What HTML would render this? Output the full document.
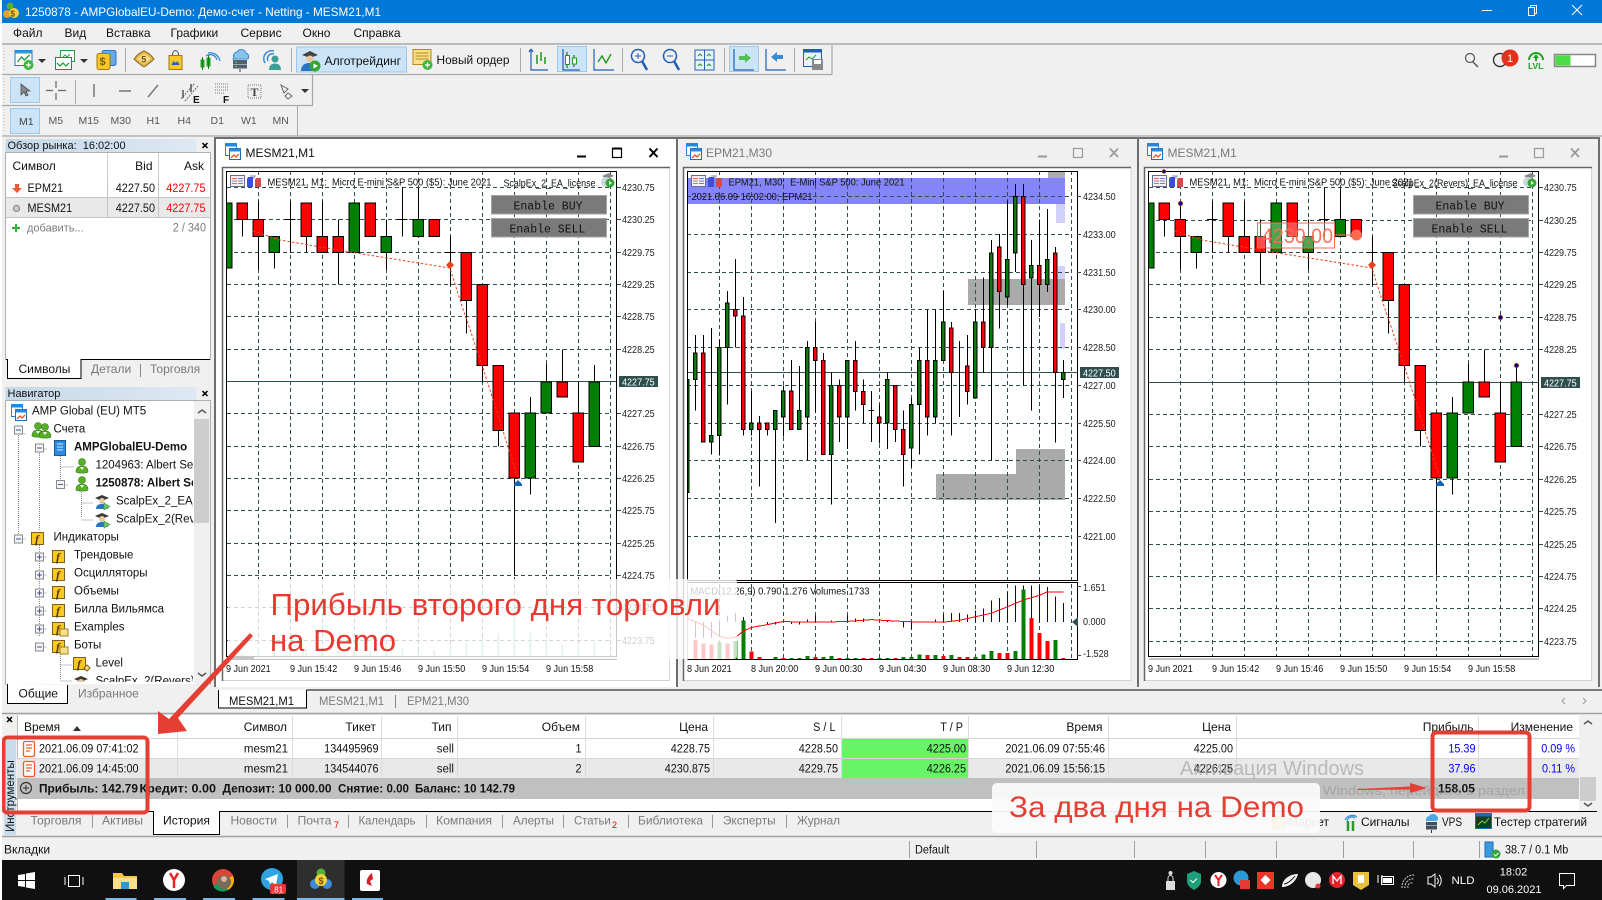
<!DOCTYPE html>
<html><head><meta charset="utf-8"><title>MT5</title>
<style>
html,body{margin:0;padding:0;background:#f0f0f0;overflow:hidden}
svg{display:block}
text{font-family:"Liberation Sans","Noto Sans CJK SC",sans-serif;font-size:11.5px;fill:#111;white-space:pre}
.m{font-size:12px}
.t{font-size:12px;transform-box:fill-box;transform-origin:0 50%;transform:scaleX(.905)}
.t.e{transform-origin:100% 50%}
.a{font-size:10.4px;fill:#222;transform-box:fill-box;transform-origin:0 50%;transform:scaleX(.87)}
.s{font-size:10.4px;fill:#111;transform-box:fill-box;transform-origin:0 50%;transform:scaleX(.87)}
.sl{font-size:10.4px;fill:#111}
.g{fill:#7a7a7a}
.b{font-weight:bold}
.e{text-anchor:end}
.w{fill:#fff}
.mo{font-family:"Liberation Mono",monospace;font-size:11.5px;fill:#111}
.f{font-family:"Liberation Serif",serif;font-style:italic;font-weight:bold;font-size:12px;fill:#5a3a00}
.c *{vector-effect:non-scaling-stroke}
.c{shape-rendering:crispEdges}
</style></head><body>
<svg width="1602" height="900" viewBox="0 0 1602 900" xmlns="http://www.w3.org/2000/svg">
<defs>
<clipPath id="tc"><rect x="6" y="401" width="187" height="281"/></clipPath>
<linearGradient id="hd" x1="0" x2="1" y1="0" y2="0"><stop offset="0" stop-color="#c6d9ea"/><stop offset="1" stop-color="#dde8f2"/></linearGradient>
<g id="wi"><rect x=".5" y=".5" width="11" height="12" fill="#fff" stroke="#1e88e5"/><rect x=".5" y=".5" width="11" height="3" fill="#1e88e5"/><rect x="4.5" y="5.5" width="11" height="11" fill="#fff" stroke="#1c6cb8"/><rect x="4.5" y="5.5" width="11" height="3" fill="#2a8ae0"/><path d="M6 15l3-3 2 2 3-3" fill="none" stroke="#e8542a" stroke-width="1.3"/></g>
<g id="hi"><rect x=".5" y=".5" width="14" height="11" fill="#f2f2f6" stroke="#6a6a96"/><path d="M2 3.500h5M2 6h5M2 8.500h5" stroke="#e46a6a"/><path d="M8 3.500h5M8 6h5M8 8.500h5" stroke="#7a7ad0"/><path d="M18 2h5v10h-6V4z" fill="#3c4fd8"/><path d="M26 3h5v9h-6V5z" fill="#d84a4a"/><path d="M20 1h6M24 1v3" stroke="#888" fill="none"/></g>
<g id="ro"><path d="M3 3l7-3 5 3-7 3z" fill="#888"/><circle cx="7" cy="9" r="5" fill="#c9d6e0"/><circle cx="11" cy="10" r="4.500" fill="#35a535"/><path d="M10 8l3 2-3 2z" fill="#fff"/></g>
<g id="us"><circle cx="7" cy="4" r="3.500" fill="#58b02a" stroke="#2d7a10" stroke-width=".6"/><path d="M1 14c0-5 3-6 6-6s6 1 6 6c-2 1.500-10 1.500-12 0z" fill="#58b02a" stroke="#2d7a10" stroke-width=".6"/><path d="M5 9l2 3 2-3" fill="#fff"/></g>
<g id="bot"><path d="M1 4l7-3 7 3-7 3z" fill="#3a3a3a"/><circle cx="8" cy="7" r="3" fill="#e9c7a0"/><path d="M2 15c0-4 3-5 6-5s6 1 6 5z" fill="#2b73c8"/><path d="M10 9l6 3.500-6 3.500z" fill="#6fc36f" stroke="#3c9a3c" stroke-width=".6"/></g>
<g id="fb"><rect x=".5" y=".5" width="12" height="12" fill="#f9c922" stroke="#7b6218"/></g>
<g id="pb"><rect x=".5" y=".5" width="8" height="8" fill="#f4f4f4" stroke="#8a8a8a"/><path d="M2 4.500h5M4.500 2v5" stroke="#3a5a9a"/></g>
<g id="mb"><rect x=".5" y=".5" width="8" height="8" fill="#f4f4f4" stroke="#8a8a8a"/><path d="M2 4.500h5" stroke="#3a5a9a"/></g>
<g id="dl"><rect x="3.500" y=".5" width="11" height="15" rx="1.500" fill="#fff" stroke="#e8602a" stroke-width="1.300"/><path d="M6 4h6M6 7h6M6 10h4" stroke="#e8602a" stroke-width="1.200"/></g>
<g id="c1" class="c">
<path fill="none" stroke="#000" d="M67 222V270M115 172V362M163 315V360M211 172V315M195 222H227M259 270V315M307 172V315M355 222V404M499 222V362M547 133V270M531 222H563M595 133V222M691 270V408M675 315H707M739 449V542M787 631V677M835 813V858M883 947V1219M931 720V993M979 626V677M1027 586V677M1075 677V765M1123 630V677"/>
<path fill="#008000" stroke="#000" d="M20 177H36V359H20ZM147 270h32v45h-32zM387 177h32v138h-32zM483 270h32v45h-32zM579 222h32v48h-32zM915 765h32v182h-32zM963 677h32v88h-32zM1107 677h32v181h-32z"/>
<path fill="#f00" stroke="#000" d="M51 177h32v45h-32zM99 222h32v48h-32zM243 177h32v93h-32zM291 270h32v45h-32zM339 270h32v45h-32zM435 177h32v93h-32zM627 222h32v48h-32zM723 315h32v134h-32zM771 404h32v227h-32zM819 631h32v182h-32zM867 765h32v182h-32zM1059 765h32v137h-32zM1011 677h32v43h-32z"/>
</g>
<g id="c1m">
<path fill="none" stroke="#f0401a" stroke-dasharray="2.500 2" d="M253 231L280 240 353 252.500 450 268 460 300 482 365 503 431 518 478"/>
<path d="M450 261l4 4-4 4-4-4z" fill="#e8401a"/>
<path d="M518 480l4 4v2h-8v-2z" fill="#1464b4"/>
</g>
</defs>

<rect width="1602" height="900" fill="#f0f0f0"/>
<!-- title bar -->
<rect x="2" y="0" width="1600" height="23" fill="#0078d7"/>
<circle cx="10" cy="6" r="3.500" fill="#5cb030"/><circle cx="7" cy="14" r="4" fill="#e8a020"/><circle cx="14" cy="13" r="5" fill="#f3d040"/><text x="10.500" y="16.500" style="font-size:8px;font-weight:bold;fill:#7a4a00">$</text>
<text x="25" y="16" class="m w" textLength="356" lengthAdjust="spacingAndGlyphs">1250878 - AMPGlobalEU-Demo: Демо-счет - Netting - MESM21,M1</text>
<path d="M1482 10.500h10" stroke="#fff"/><path d="M1528.500 7.500h6v8h-6zM1530.500 7.500v-2h6v8h-2" fill="none" stroke="#fff"/><path d="M1572 5l10 10M1582 5l-10 10" stroke="#fff"/>
<!-- menu -->
<rect y="23" width="1602" height="21" fill="#f0f0f0"/>
<text x="13" y="37" class="m">Файл</text><text x="64.500" y="37" class="m">Вид</text><text x="106" y="37" class="m">Вставка</text><text x="170.500" y="37" class="m">Графики</text><text x="240.500" y="37" class="m">Сервис</text><text x="302.500" y="37" class="m">Окно</text><text x="353.500" y="37" class="m">Справка</text>
<path d="M0 44h1602" stroke="#a8a8a8" stroke-width="1.500"/>
<!-- toolbars frames -->
<path d="M2 74.500H832V45M2 105.500H312.500V75M2 136H1602" fill="none" stroke="#a8a8a8" stroke-width="1.200"/>
<path d="M4 48v24M4 78v25M4 109v24" stroke="#bbb" stroke-dasharray="1 2" fill="none"/>
<!-- toolbar 1 icons -->
<g transform="translate(14.500,50)"><rect x=".5" y=".5" width="17" height="15" fill="#fff" stroke="#2373c8"/><rect x=".5" y=".5" width="17" height="3" fill="#2a9ad8"/><path d="M3 12l4-5 3 3 5-5" fill="none" stroke="#1f9a3a" stroke-width="1.300"/><circle cx="14" cy="15" r="5" fill="#3fb53f"/><path d="M11.500 15h5M14 12.500v5" stroke="#fff" stroke-width="1.300"/></g>
<path d="M38 59h8l-4 4zM80 59h8l-4 4z" fill="#333"/>
<g transform="translate(55,50)"><rect x="5.500" y=".5" width="14" height="11" fill="#fff" stroke="#2a9a40"/><path d="M8 7l2-2 2 2 3-3" fill="none" stroke="#2a9a40"/><rect x=".5" y="7.500" width="16" height="12" fill="#fff" stroke="#2373c8"/><path d="M2 13l3 3 3-3 3 3 3-3" stroke="#2a9a40" fill="none" stroke-width="1.300"/></g>
<g transform="translate(96.500,49)"><rect x="5.500" y="1.500" width="14" height="15" rx="2" fill="#6aa8e8" stroke="#2373c8"/><rect x=".5" y="4.500" width="13" height="16" rx="2" fill="#f6c92a" stroke="#a07810"/><text x="3" y="16" style="font-size:11px;font-weight:bold;fill:#7a5a00">$</text></g>
<path d="M125.500 48v24M291.500 48v24M520.500 48v24M622.500 48v24M724.500 48v24M794.500 48v24" stroke="#a8a8a8"/>
<g transform="translate(134,50)"><path d="M0 9C3 5 7 2 10 1c3 1 7 4 10 8-3 3-7 6-10 8C7 15 3 12 0 9z" fill="#e0b84a" stroke="#8a6a20"/><path d="M3 9c3-3 5-4 7-5 2 1 4 2 7 5-3 2-5 4-7 5-2-1-4-3-7-5z" fill="#f4dc8e"/><text x="7.300" y="12.500" style="font-size:9px;font-weight:bold;fill:#7a5200">5</text></g>
<g transform="translate(168.500,50)"><rect x=".5" y="5.500" width="13" height="14" fill="#f6c92a" stroke="#a07810"/><path d="M4 5c0-6 6-6 6 0" fill="none" stroke="#555"/><path d="M3 15l2-4 2 2 2-2 2 4z" fill="#2a5ac8"/></g>
<g transform="translate(199,49)"><path d="M7 7a7 7 0 0 1 11 4M9 4a10 10 0 0 1 12 8" fill="none" stroke="#3a8ad8" stroke-width="1.300"/><rect x="1.500" y="10.500" width="4" height="8" fill="#22a022"/><rect x="7.500" y="8.500" width="4" height="9" fill="#22a022"/><path d="M3.500 8v13M9.500 6v14" stroke="#138013"/></g>
<g transform="translate(230,49)"><path d="M4 9a4 4 0 0 1 3-6 5 5 0 0 1 9 1 4 4 0 0 1 2 6H3z" fill="#8ac4ea" stroke="#3a8ad8"/><rect x="3" y="11" width="14" height="4" fill="#506070"/><rect x="3" y="15.500" width="14" height="4" fill="#506070"/><path d="M5 13h2M5 17.500h2" stroke="#5fd65f"/><path d="M10 20v3" stroke="#333"/></g>
<g transform="translate(262,49)"><path d="M3 14a8 8 0 0 1 9-12M6 12a5 5 0 0 1 6-7" fill="none" stroke="#3a8ad8" stroke-width="1.500"/><circle cx="13" cy="10" r="3.500" fill="#3aa098"/><path d="M7 21c0-5 3-6.500 6-6.500s6 1.500 6 6.500z" fill="#3aa098"/></g>
<rect x="296.500" y="47" width="110" height="25" fill="#cce4f7" stroke="#99c9ef"/>
<g transform="translate(300,50)"><path d="M2 5l8-4 8 4-8 3z" fill="#444"/><circle cx="10" cy="9" r="3.500" fill="#e9c7a0"/><path d="M1 21c0-6 4-8 8-8s7 2 7 8z" fill="#2b73c8"/><circle cx="15" cy="16" r="5.500" fill="#35a535"/><path d="M13.500 13.500l4.500 2.500-4.500 2.500z" fill="#fff"/></g>
<text x="324.500" y="65" class="m" textLength="76.500" lengthAdjust="spacingAndGlyphs">Алготрейдинг</text>
<g transform="translate(412.500,49)"><rect x=".5" y=".5" width="18" height="15" fill="#f9e08a" stroke="#b48a18"/><path d="M3 4h13M3 7h13M3 10h13" stroke="#b48a18"/><circle cx="15" cy="16" r="5" fill="#3fb53f"/><path d="M12.500 16h5M15 13.500v5" stroke="#fff" stroke-width="1.300"/></g>
<text x="436.500" y="64" class="m" textLength="73" lengthAdjust="spacingAndGlyphs">Новый ордер</text>
<g fill="none" stroke="#1f5fb4" stroke-width="1.200"><path d="M531 49v21h17M531 49l-2 3M531 49l2 3"/></g><path d="M537 55v9M541 52v9M545 57v7" stroke="#1e9a1e" stroke-width="1.500"/>
<rect x="557.500" y="46.500" width="29" height="25" fill="#cce4f7" stroke="#99c9ef"/>
<g fill="none" stroke="#1f5fb4" stroke-width="1.200"><path d="M563 49v21h17"/><path d="M594 49v21h20"/><path d="M766 49v21h20"/></g>
<path d="M567 52v16M574 55v12" stroke="#333"/><rect x="565.500" y="55.500" width="4" height="9" fill="#fff" stroke="#1e9a1e"/><rect x="572.500" y="58" width="4" height="6" fill="#fff" stroke="#1e9a1e"/>
<path d="M598 62l4-6 4 7 5-9" fill="none" stroke="#1e9a1e" stroke-width="1.400"/>
<g fill="none" stroke="#1f5fb4"><circle cx="638" cy="56" r="6.500" stroke-width="1.500"/><path d="M642 61l5 9" stroke-width="2.500"/><path d="M635 56h6M638 53v6"/><circle cx="670" cy="56" r="6.500" stroke-width="1.500"/><path d="M674 61l5 9" stroke-width="2.500"/><path d="M667 56h6"/></g>
<rect x="695" y="50" width="19" height="20" fill="#e8f2fb" stroke="#1f5fb4"/><path d="M695 60h19M704.500 50v20" stroke="#1f5fb4"/><path d="M698 56l2-2 2 2M707 56l2-2 2 2M698 66l2-2 2 2M707 66l2-2 2 2" stroke="#1e9a1e" fill="none"/>
<rect x="729.500" y="46.500" width="29" height="25" fill="#cce4f7" stroke="#99c9ef"/>
<path d="M734 49v21h20" fill="none" stroke="#1f5fb4" stroke-width="1.200"/><path d="M739 56h6v-3l6 5-6 5v-3h-6z" fill="#52c052"/>
<path d="M783 55h-6v-3l-6 5 6 5v-3h6z" fill="#3a8ad8"/>
<rect x="803.500" y="49.500" width="18" height="17" fill="#e8f2fb" stroke="#1f5fb4"/><rect x="803.500" y="49.500" width="18" height="3" fill="#1f5fb4"/><path d="M806 60l3-3 3 2 4-4" stroke="#1e9a1e" fill="none"/><rect x="812" y="59" width="11" height="11" fill="#888"/><rect x="814" y="60" width="7" height="4" fill="#fff"/>
<!-- right status icons -->
<circle cx="1470" cy="58" r="4.500" fill="none" stroke="#555" stroke-width="1.200"/><path d="M1473 62l5 5" stroke="#555" stroke-width="1.500"/>
<circle cx="1500" cy="60" r="6.500" fill="none" stroke="#333" stroke-width="1.400"/><circle cx="1510" cy="58" r="8.500" fill="#e5301c"/><text x="1507" y="62" style="font-size:11px;fill:#fff">1</text>
<path d="M1529 60a7 7 0 0 1 14 0" fill="none" stroke="#22a022" stroke-width="2"/><path d="M1536 54l3 4h-2v3h-2v-3h-2z" fill="#22a022"/><text x="1528" y="69" style="font-size:8.500px;fill:#22a022;font-weight:bold">LVL</text>
<rect x="1554.500" y="54.500" width="41" height="12" fill="#fff" stroke="#888" stroke-width="1.500"/><rect x="1555.500" y="55.500" width="15" height="10" fill="#4cdc48"/>
<!-- toolbar 2 -->
<rect x="10.500" y="77.500" width="29" height="25" fill="#cce4f7" stroke="#99c9ef"/>
<path d="M21 84l0 11 3-3 2 4 2-1-2-4h4z" fill="#888" stroke="#444" stroke-width=".7"/>
<path d="M46 90.500h7M58 90.500h8M56 81v7M56 93v7" stroke="#666" stroke-width="1.200"/>
<path d="M75.500 80v24" stroke="#a8a8a8"/>
<path d="M94 84v13M119 91h12M158 85l-10 12" stroke="#777" stroke-width="1.500"/>
<g stroke="#777" fill="none" stroke-width="1.100" stroke-dasharray="2 1"><path d="M181 99l14-16M185 101l13-15"/></g><path d="M183 90v8M191 84v8" stroke="#555" stroke-width="1.500"/><text x="193" y="103" style="font-size:10px;font-weight:bold">E</text>
<path d="M215 84h13M215 87h13M215 90h13M215 93h10" stroke="#777" stroke-dasharray="1 1"/><text x="223" y="103" style="font-size:10px;font-weight:bold">F</text>
<rect x="248" y="85" width="13" height="13" fill="none" stroke="#777" stroke-dasharray="1 1"/><text x="250.500" y="96" style="font-family:'Liberation Serif',serif;font-size:12px;font-weight:bold;fill:#444">T</text>
<path d="M281 85l7 4-4 4zM288 93l4 3-4 3-3-3z" fill="none" stroke="#666"/>
<path d="M301 89h8l-4 4z" fill="#333"/>
<!-- toolbar 3 -->
<rect x="10.500" y="108.500" width="29" height="25" fill="#cce4f7" stroke="#99c9ef"/>
<text x="19" y="125" style="font-size:10.500px;fill:#444">M1</text><text x="48.500" y="124" style="font-size:10.500px;fill:#555">M5</text><text x="78.500" y="124" style="font-size:10.500px;fill:#555">M15</text><text x="110.500" y="124" style="font-size:10.500px;fill:#555">M30</text><text x="146.500" y="124" style="font-size:10.500px;fill:#555">H1</text><text x="177.500" y="124" style="font-size:10.500px;fill:#555">H4</text><text x="210.500" y="124" style="font-size:10.500px;fill:#555">D1</text><text x="241" y="124" style="font-size:10.500px;fill:#555">W1</text><text x="272.500" y="124" style="font-size:10.500px;fill:#555">MN</text>
<path d="M297.500 106v30" stroke="#a8a8a8"/>

<!-- market watch -->
<rect x="5.500" y="139" width="191" height="13" fill="url(#hd)"/>
<text x="7.500" y="149" style="font-size:11px">Обзор рынка:  16:02:00</text>
<path d="M202.500 143l5 5M207.500 143l-5 5" stroke="#000" stroke-width="1.500"/>
<rect x="5.500" y="152.500" width="205" height="207" fill="#fff" stroke="#b0b0b0"/>
<path d="M107.500 153v64M158.500 153v64" stroke="#d0d0d0"/>
<rect x="6" y="197.500" width="204" height="20" fill="#e9e9e9"/>
<path d="M6 197.500h204M6 217.500h204M107.500 178v40M158.500 178v40" stroke="#c4c4c4"/>
<text x="12.500" y="170" class="m">Символ</text><text x="152.500" y="170" class="m e">Bid</text><text x="204" y="170" class="m e">Ask</text>
<path d="M15 184h4v4h3l-5 5-5-5h3z" fill="#ec5a3a"/>
<text x="27.500" y="192" class="t">EPM21</text><text x="155" y="192" class="t e">4227.50</text><text x="205.500" y="192" class="t e" style="fill:#f00">4227.75</text>
<circle cx="16.500" cy="208.500" r="3" fill="#ccc" stroke="#888" stroke-width="1.200"/>
<text x="27.500" y="212" class="t">MESM21</text><text x="155" y="212" class="t e">4227.50</text><text x="205.500" y="212" class="t e" style="fill:#f00">4227.75</text>
<path d="M12 228h8M16 224v8" stroke="#2fb52f" stroke-width="2"/>
<text x="27" y="231.500" class="m g" style="font-size:11px">добавить...</text><text x="206" y="231.500" class="t g e">2 / 340</text>
<rect x="6" y="360" width="204" height="19" fill="#f0f0f0"/>
<path d="M6 359.500h204" stroke="#000"/>
<path d="M7.500 360v18.500H81V359.500" fill="#fff" stroke="#000"/><rect x="8" y="359" width="72.500" height="2" fill="#fff"/>
<text x="18.500" y="373" class="m">Символы</text><text x="91" y="373" class="m g">Детали</text><path d="M140.500 364v13" stroke="#888"/><text x="150" y="373" class="m g">Торговля</text>

<!-- navigator -->
<rect x="5.500" y="387" width="191" height="13.500" fill="url(#hd)"/>
<text x="7.500" y="397" style="font-size:11px">Навигатор</text>
<path d="M202.500 391l5 5M207.500 391l-5 5" stroke="#000" stroke-width="1.500"/>
<rect x="5.500" y="400.500" width="205" height="284" fill="#fff" stroke="#b0b0b0"/>
<rect x="194" y="401" width="16" height="283" fill="#f0f0f0"/><rect x="194" y="419" width="15" height="104" fill="#cdcdcd"/>
<path d="M198 413l4-3 4 3M198 673l4 3 4-3" fill="none" stroke="#555" stroke-width="1.500"/>
<g fill="none" stroke="#888" stroke-dasharray="1 1"><path d="M18.500 435v108M18.500 434h8M18.500 539h8M39.500 453v78M39.500 449h8M60.500 454v28M60.500 467h14M60.500 485h8M81.500 490v28M81.500 503h12M81.500 520h12M39.500 543v93M39.500 557h8M39.500 575h8M39.500 593h8M39.500 611h8M39.500 629h8M39.500 647h8M60.500 652v28M60.500 665h12M60.500 681h12"/></g>
<use href="#wi" x="11" y="404"/>
<g clip-path="url(#tc)">
<text x="32" y="414.500">AMP Global (EU) MT5</text>
<use href="#mb" x="14" y="425.500"/><use href="#us" x="31" y="422"/><use href="#us" x="38" y="423"/><text x="53.500" y="432.500">Счета</text>
<use href="#mb" x="35" y="443.500"/><rect x="54.500" y="440.500" width="11" height="15" fill="#2a8ae0" stroke="#1a5a98"/><path d="M57 444h6M57 447h6M57 450h6" stroke="#cfe8ff"/>
<text x="74" y="450.500" class="b">AMPGlobalEU-Demo</text>
<use href="#us" x="75" y="458"/><text x="95.500" y="468.500">1204963: Albert Sergeev</text>
<use href="#mb" x="56" y="480"/><use href="#us" x="75" y="476"/><text x="95.500" y="486.500" class="b">1250878: Albert Sergeev</text>
<use href="#bot" x="94" y="494"/><text x="116" y="504.500">ScalpEx_2_EA_license</text>
<use href="#bot" x="94" y="512"/><text x="116" y="522.500">ScalpEx_2(Revers)_EA</text>
<use href="#mb" x="14" y="534.500"/><use href="#fb" x="31" y="532"/><text x="35" y="543" class="f">f</text><text x="53.500" y="540.500">Индикаторы</text>
<use href="#pb" x="35" y="552.500"/><use href="#fb" x="52" y="550"/><text x="56" y="561" class="f">f</text><text x="74" y="558.500">Трендовые</text>
<use href="#pb" x="35" y="570.500"/><use href="#fb" x="52" y="568"/><text x="56" y="579" class="f">f</text><text x="74" y="576.500">Осцилляторы</text>
<use href="#pb" x="35" y="588.500"/><use href="#fb" x="52" y="586"/><text x="56" y="597" class="f">f</text><text x="74" y="594.500">Объемы</text>
<use href="#pb" x="35" y="606.500"/><use href="#fb" x="52" y="604"/><text x="56" y="615" class="f">f</text><text x="74" y="612.500">Билла Вильямса</text>
<use href="#pb" x="35" y="624.500"/><use href="#fb" x="52" y="622"/><text x="56" y="633" class="f">f</text><rect x="60" y="629" width="8" height="7" fill="#f9e08a" stroke="#a08020"/><text x="74" y="630.500">Examples</text>
<use href="#mb" x="35" y="642.500"/><use href="#fb" x="52" y="640"/><text x="56" y="651" class="f">f</text><rect x="60" y="647" width="8" height="7" fill="#f9e08a" stroke="#a08020"/><text x="74" y="648.500">Боты</text>
<use href="#fb" x="73" y="657"/><text x="77" y="668" class="f">f</text><path d="M84 668l3-3 3 3-3 3z" fill="#f9e08a" stroke="#806010"/><text x="95.500" y="666.500">Level</text>
<use href="#bot" x="73" y="675"/><text x="95.500" y="684.500">ScalpEx_2(Revers)</text>
</g>
<rect x="6" y="684" width="204" height="21" fill="#f0f0f0"/>
<path d="M7.500 684v19.500H67.500V685" fill="#fff" stroke="#000"/>
<text x="18.500" y="697.500" class="m">Общие</text><text x="78" y="697.500" class="m g">Избранное</text>

<!-- chart windows chrome -->
<rect x="216" y="139" width="460" height="548" fill="#fff"/>
<rect x="214" y="137" width="464" height="2" fill="#6e6e6e"/><rect x="678" y="137" width="460" height="2" fill="#6e6e6e"/><rect x="1138" y="137" width="462" height="2" fill="#6e6e6e"/>
<path d="M215 137v550M677 137v550M1138 137v550M1599 137v550" stroke="#6e6e6e" stroke-width="2" fill="none"/>
<rect x="222" y="167" width="447.500" height="513" fill="#fff"/><path d="M669.500 167.500V680.500H222" fill="none" stroke="#d4d4d4"/><path d="M222.500 681V167.500H670" fill="none" stroke="#666" stroke-width="1.500"/>
<rect x="683" y="167" width="448" height="513" fill="#fff"/><path d="M1131 167.500V680.500H683" fill="none" stroke="#d4d4d4"/><path d="M683.500 681V167.500H1131" fill="none" stroke="#666" stroke-width="1.500"/>
<rect x="1144" y="167" width="447.500" height="513" fill="#fff"/><path d="M1591.500 167.500V680.500H1144" fill="none" stroke="#d4d4d4"/><path d="M1144.500 681V167.500H1592" fill="none" stroke="#666" stroke-width="1.500"/>
<use href="#wi" x="225" y="143"/><text x="245.500" y="157" class="m">MESM21,M1</text>
<path d="M577 156.500h9" stroke="#000" stroke-width="2"/><rect x="612.500" y="148.500" width="9" height="9" fill="none" stroke="#000" stroke-width="1.200"/><path d="M612.500 148.500h9" stroke="#000" stroke-width="2"/><path d="M649.500 148.500l8 8.500M657.500 148.500l-8 8.500" stroke="#000" stroke-width="2"/>
<use href="#wi" x="686" y="143"/><text x="706" y="157" class="m g">EPM21,M30</text>
<path d="M1038 156.500h9" stroke="#999" stroke-width="2"/><rect x="1073.500" y="148.500" width="9" height="9" fill="none" stroke="#999" stroke-width="1.200"/><path d="M1110 148.500l8 8.500M1118 148.500l-8 8.500" stroke="#999" stroke-width="1.700"/>
<use href="#wi" x="1147" y="143"/><text x="1167.500" y="157" class="m g">MESM21,M1</text>
<path d="M1499 156.500h9" stroke="#999" stroke-width="2"/><rect x="1534.500" y="148.500" width="9" height="9" fill="none" stroke="#999" stroke-width="1.200"/><path d="M1571 148.500l8 8.500M1579 148.500l-8 8.500" stroke="#999" stroke-width="1.700"/>

<!-- CHART 1 -->
<path fill="none" stroke="#2f4f4f" stroke-dasharray="4 3" d="M227 187.500H611M227 219.500H611M227 252.500H611M227 284.500H611M227 316.500H611M227 349.500H611M227 413.500H611M227 446.500H611M227 478.500H611M227 510.500H611M227 543.500H611M227 575.500H611M227 607.500H611M227 640.500H611M258.500 171V657M290.500 171V657M322.500 171V657M354.500 171V657M386.500 171V657M418.500 171V657M450.500 171V657M482.500 171V657M514.500 171V657M546.500 171V657M578.500 171V657M610.500 171V657"/>
<path d="M227 381.500H617" stroke="#2f4f4f"/>
<g transform="translate(220,140) scale(.33333,.35714)"><use href="#c1"/></g>
<use href="#c1m"/>
<g transform="translate(220,140) scale(.33333,.35714)" class="c"><path fill="#7fbf7f" d="M64 1432h4v15h-4zM113 1420h4v27h-4zM161 1428h4v19h-4zM209 1425h4v22h-4zM257 1420h4v27h-4zM305 1428h4v19h-4zM353 1428h4v19h-4zM401 1425h4v22h-4zM449 1430h4v17h-4zM497 1415h4v32h-4zM545 1422h4v25h-4zM593 1430h4v17h-4zM641 1428h4v19h-4zM689 1422h4v25h-4zM737 1405h4v42h-4zM785 1392h4v55h-4zM833 1382h4v65h-4zM881 1330h4v117h-4zM929 1380h4v67h-4zM977 1402h4v45h-4zM1025 1412h4v35h-4zM1073 1415h4v32h-4zM1121 1408h4v39h-4z"/></g>
<rect x="226.500" y="171.500" width="390" height="485" fill="none" stroke="#000"/>
<path d="M227 659h390" stroke="#888" stroke-width="1"/><path d="M227 658h27" stroke="#000" stroke-width="2"/>
<path d="M617 187.500h4M617 219.500h4M617 252.500h4M617 284.500h4M617 316.500h4M617 349.500h4M617 413.500h4M617 446.500h4M617 478.500h4M617 510.500h4M617 543.500h4M617 575.500h4M617 607.500h4M617 640.500h4" stroke="#2f4f4f"/>
<text class="a" x="622" y="191">4230.75</text><text class="a" x="622" y="223">4230.25</text><text class="a" x="622" y="256">4229.75</text><text class="a" x="622" y="288">4229.25</text><text class="a" x="622" y="320">4228.75</text><text class="a" x="622" y="353">4228.25</text><text class="a" x="622" y="417">4227.25</text><text class="a" x="622" y="450">4226.75</text><text class="a" x="622" y="482">4226.25</text><text class="a" x="622" y="514">4225.75</text><text class="a" x="622" y="547">4225.25</text><text class="a" x="622" y="579">4224.75</text><text class="a" x="622" y="611">4224.25</text><text class="a" x="622" y="644">4223.75</text>
<rect x="619" y="376" width="39" height="11" fill="#2f4f4f"/><text x="622" y="385.500" class="a" style="fill:#fff">4227.75</text>
<text class="s" x="226" y="672">9 Jun 2021</text><text class="s" x="290" y="672">9 Jun 15:42</text><text class="s" x="354" y="672">9 Jun 15:46</text><text class="s" x="418" y="672">9 Jun 15:50</text><text class="s" x="482" y="672">9 Jun 15:54</text><text class="s" x="546" y="672">9 Jun 15:58</text>
<use href="#hi" x="230" y="175"/>
<text x="267.500" y="185.500" class="sl" textLength="224" lengthAdjust="spacingAndGlyphs">MESM21, M1:  Micro E-mini S&amp;P 500 ($5): June 2021</text>
<text x="503.500" y="186.500" class="sl" textLength="92" lengthAdjust="spacingAndGlyphs">ScalpEx_2_EA_license</text>
<use href="#ro" x="599" y="173"/>
<rect x="491.500" y="195.500" width="115" height="18.500" fill="#7a7a7a" stroke="#a4a4a4"/><text x="513.500" y="209.500" class="mo">Enable BUY</text>
<rect x="491.500" y="218.500" width="115" height="18.500" fill="#7a7a7a" stroke="#a4a4a4"/><text x="509.500" y="232.500" class="mo">Enable SELL</text>

<!-- CHART 2 -->
<rect x="687" y="178" width="378" height="26" fill="#8585fb"/>
<rect x="1048" y="172" width="17" height="6" fill="#ababab"/>
<rect x="1056" y="204" width="9" height="19" fill="#d0d0fb"/><rect x="1058" y="266" width="7" height="13" fill="#d0d0fb"/><rect x="1060" y="323" width="5" height="26" fill="#d0d0fb"/>
<rect x="968" y="279" width="97" height="26" fill="#aaaaaa"/>
<path d="M936 474H1016V449H1065V500H936Z" fill="#aaaaaa"/>
<path fill="none" stroke="#2f4f4f" stroke-dasharray="4 3" d="M687 196.500H1071M687 234.500H1071M687 272.500H1071M687 309.500H1071M687 347.500H1071M687 385.500H1071M687 423.500H1071M687 460.500H1071M687 498.500H1071M687 536.500H1071M719.500 171V659M751.500 171V659M783.500 171V659M815.500 171V659M847.500 171V659M879.500 171V659M911.500 171V659M943.500 171V659M975.500 171V659M1007.500 171V659M1039.500 171V659M1071.500 171V659"/>
<path d="M687 372.500H1077" stroke="#2f4f4f"/>
<g transform="translate(680,140) scale(.33333,.35714)" class="c">
<path fill="none" stroke="#000" d="M46 546V758M70 546V846M94 527V880M118 560V883M142 423V741M166 333V581M190 440V827M214 703V827M238 773V970M262 793V827M286 757V1073M310 687V830M334 616V810M358 633V810M382 563V897M406 510V765M430 597V880M454 651V1020M478 670V845M502 617V865M526 563V757M550 670V793M574 703V845M566 757H582M598 740V850M622 651V865M646 687V845M670 757V970M694 723V915M718 581V880M742 475V828M766 475V793M790 423V617M814 510V828M838 563V775M862 546V741M886 475V723M910 385V651M934 280V897M958 263V528M982 170V462M1006 123V370M1030 123V687M1054 280V757M1078 223V495M1102 193V425M1126 300V847M1150 616V723"/>
<path fill="#008000" stroke="#000" d="M22 670h5v317h-5zM41 597h10v73h-10zM89 827h10v19h-10zM113 581h10v246h-10zM137 457h10v124h-10zM209 793h10v17h-10zM281 757h10v53h-10zM305 703h10v72h-10zM353 757h10v53h-10zM377 581h10v194h-10zM449 687h10v193h-10zM497 617h10v158h-10zM617 670h10v123h-10zM689 740h10v123h-10zM713 617h10v123h-10zM761 617h10v158h-10zM785 510h10v107h-10zM881 510h10v213h-10zM929 317h10v264h-10zM977 334h10v106h-10zM1001 158h10v159h-10zM1049 351h10v36h-10zM1097 334h10v71h-10zM1145 651h10v19h-10z"/>
<path fill="#f00" stroke="#000" d="M65 597h10v249h-10zM161 475h10v18h-10zM185 493h10v317h-10zM233 793h10v17h-10zM257 793h10v17h-10zM329 703h10v107h-10zM401 581h10v36h-10zM425 617h10v263h-10zM473 687h10v88h-10zM521 617h10v87h-10zM545 704h10v36h-10zM593 775h10v18h-10zM641 687h10v123h-10zM665 810h10v70h-10zM737 617h10v158h-10zM809 527h10v124h-10zM857 633h10v71h-10zM905 510h10v71h-10zM953 300h10v124h-10zM1025 158h10v247h-10zM1073 351h10v54h-10zM1121 317h10v334h-10z"/>
<path fill="none" stroke="#000080" d="M46 1350V1395M70 1350V1395M94 1350V1395M118 1350V1390M142 1350V1332M166 1350V1325M190 1350V1335M214 1350V1345M262 1350V1355M286 1350V1357M310 1350V1347M334 1350V1355M358 1350V1357M382 1350V1342M406 1350V1332M454 1350V1345M502 1350V1332M526 1350V1340M550 1350V1340M622 1350V1345M670 1350V1365M694 1350V1370M766 1350V1342M790 1350V1328M814 1350V1325M838 1350V1325M862 1350V1328M886 1350V1318M910 1350V1312M934 1350V1290M958 1350V1282M982 1350V1265M1006 1350V1247M1030 1350V1247M1054 1350V1247M1078 1350V1247M1102 1350V1252M1126 1350V1278M1150 1350V1297"/>
<path fill="#008000" d="M112 1405h12v48h-12zM160 1403h12v50h-12zM184 1345h12v108h-12zM280 1448h12v5h-12zM328 1450h12v3h-12zM352 1450h12v3h-12zM376 1445h12v8h-12zM424 1448h12v5h-12zM448 1445h12v8h-12zM496 1450h12v3h-12zM520 1450h12v3h-12zM592 1450h12v3h-12zM616 1450h12v3h-12zM664 1448h12v5h-12zM688 1448h12v5h-12zM712 1440h12v13h-12zM760 1442h12v11h-12zM808 1442h12v11h-12zM880 1448h12v5h-12zM904 1440h12v13h-12zM928 1431h12v22h-12zM1000 1431h12v22h-12zM1024 1258h12v195h-12zM1120 1400h12v53h-12z"/>
<path fill="#f00" d="M40 1400h12v53h-12zM64 1410h12v43h-12zM88 1412h12v41h-12zM136 1410h12v43h-12zM208 1432h12v21h-12zM232 1448h12v5h-12zM304 1450h12v3h-12zM400 1448h12v5h-12zM472 1450h12v3h-12zM544 1450h12v3h-12zM568 1450h12v3h-12zM640 1450h12v3h-12zM736 1442h12v11h-12zM784 1445h12v8h-12zM832 1448h12v5h-12zM856 1448h12v5h-12zM952 1436h12v17h-12zM976 1436h12v17h-12zM1048 1338h12v115h-12zM1072 1380h12v73h-12zM1096 1403h12v50h-12zM1144 1450h12v3h-12z"/>
<path fill="none" stroke="#f00" d="M22 1340L70 1358 118 1390 142 1395 166 1393 190 1375 214 1365 262 1357 310 1348 358 1350 430 1350 502 1348 574 1343 646 1347 718 1350 790 1350 838 1345 886 1335 934 1325 982 1307 1030 1288 1078 1275 1102 1265 1150 1265"/>
</g>
<rect x="687.500" y="171.500" width="390" height="409" fill="none" stroke="#000"/>
<path d="M687.500 582.500H1077.500V659.500H687.500" fill="none" stroke="#000"/><path d="M687.500 582.500V659.500" stroke="#888"/>
<path d="M1077 196.500h4M1077 234.500h4M1077 272.500h4M1077 309.500h4M1077 347.500h4M1077 385.500h4M1077 423.500h4M1077 460.500h4M1077 498.500h4M1077 536.500h4M1077 586.500h4M1077 655.500h4" stroke="#2f4f4f"/>
<text class="a" x="1083" y="200">4234.50</text><text class="a" x="1083" y="238">4233.00</text><text class="a" x="1083" y="276">4231.50</text><text class="a" x="1083" y="313">4230.00</text><text class="a" x="1083" y="351">4228.50</text><text class="a" x="1083" y="389">4227.00</text><text class="a" x="1083" y="427">4225.50</text><text class="a" x="1083" y="464">4224.00</text><text class="a" x="1083" y="502">4222.50</text><text class="a" x="1083" y="540">4221.00</text>
<rect x="1080" y="367" width="39" height="11" fill="#2f4f4f"/><text x="1083" y="376.500" class="a" style="fill:#fff">4227.50</text>
<text class="a" x="1083" y="591">1.651</text><text class="a" x="1083" y="625">0.000</text><text class="a" x="1083" y="657">-1.528</text>
<path d="M1072 622l6-5v10z" fill="#2f4f4f"/>
<text class="s" x="687" y="672">8 Jun 2021</text><text class="s" x="751" y="672">8 Jun 20:00</text><text class="s" x="815" y="672">9 Jun 00:30</text><text class="s" x="879" y="672">9 Jun 04:30</text><text class="s" x="943" y="672">9 Jun 08:30</text><text class="s" x="1007" y="672">9 Jun 12:30</text>
<use href="#hi" x="691" y="175"/>
<text x="728.500" y="185.500" class="sl" textLength="176" lengthAdjust="spacingAndGlyphs">EPM21, M30:  E-Mini S&amp;P 500: June 2021</text>
<text x="691.500" y="200" class="sl" textLength="121" lengthAdjust="spacingAndGlyphs">2021.06.09 16:02:00; EPM21</text>
<text x="690.500" y="594.500" class="sl" textLength="179" lengthAdjust="spacingAndGlyphs">MACD(12,26,9) 0.790 1.276 Volumes 1733</text>

<!-- CHART 3 -->
<path fill="none" stroke="#2f4f4f" stroke-dasharray="4 3" d="M1149 187.500H1533M1149 220.500H1533M1149 252.500H1533M1149 284.500H1533M1149 317.500H1533M1149 349.500H1533M1149 414.500H1533M1149 446.500H1533M1149 479.500H1533M1149 511.500H1533M1149 544.500H1533M1149 576.500H1533M1149 608.500H1533M1149 641.500H1533M1180.500 171V657M1212.500 171V657M1244.500 171V657M1276.500 171V657M1308.500 171V657M1340.500 171V657M1372.500 171V657M1404.500 171V657M1436.500 171V657M1468.500 171V657M1500.500 171V657M1532.500 171V657"/>
<path d="M1149 382.500H1539" stroke="#2f4f4f"/>
<g transform="translate(1142,140) scale(.33333,.35714)"><use href="#c1"/></g>
<g transform="translate(922,0)"><use href="#c1m"/></g>
<rect x="1148.500" y="171.500" width="390" height="485" fill="none" stroke="#000"/>
<path d="M1149 659h390" stroke="#888"/>
<circle cx="1180.500" cy="203.500" r="2.300" fill="#000080" stroke="#f60" stroke-width=".6"/><circle cx="1500.500" cy="317.500" r="2.300" fill="#000080" stroke="#f60" stroke-width=".6"/><circle cx="1516.500" cy="365.500" r="2.300" fill="#000080" stroke="#f60" stroke-width=".6"/><circle cx="1164" cy="171.500" r="2" fill="#000080" stroke="#f60" stroke-width=".6"/>
<rect x="1257.500" y="223" width="77" height="25" fill="#fff" fill-opacity=".3" stroke="#ff6a50"/>
<text x="1262" y="243" style="font-size:21px;fill:#ff6a50;fill-opacity:.95" textLength="71" lengthAdjust="spacingAndGlyphs">4230.00</text>
<path d="M1335 235h21" stroke="#ff6a50"/><circle cx="1356.500" cy="235" r="5.500" fill="#ff6a50"/>
<path d="M1539 187.500h4M1539 220.500h4M1539 252.500h4M1539 284.500h4M1539 317.500h4M1539 349.500h4M1539 414.500h4M1539 446.500h4M1539 479.500h4M1539 511.500h4M1539 544.500h4M1539 576.500h4M1539 608.500h4M1539 641.500h4" stroke="#2f4f4f"/>
<text class="a" x="1544" y="191">4230.75</text><text class="a" x="1544" y="224">4230.25</text><text class="a" x="1544" y="256">4229.75</text><text class="a" x="1544" y="288">4229.25</text><text class="a" x="1544" y="321">4228.75</text><text class="a" x="1544" y="353">4228.25</text><text class="a" x="1544" y="418">4227.25</text><text class="a" x="1544" y="450">4226.75</text><text class="a" x="1544" y="483">4226.25</text><text class="a" x="1544" y="515">4225.75</text><text class="a" x="1544" y="548">4225.25</text><text class="a" x="1544" y="580">4224.75</text><text class="a" x="1544" y="612">4224.25</text><text class="a" x="1544" y="645">4223.75</text>
<rect x="1541" y="377" width="39" height="11" fill="#2f4f4f"/><text x="1544" y="386.500" class="a" style="fill:#fff">4227.75</text>
<text class="s" x="1148" y="672">9 Jun 2021</text><text class="s" x="1212" y="672">9 Jun 15:42</text><text class="s" x="1276" y="672">9 Jun 15:46</text><text class="s" x="1340" y="672">9 Jun 15:50</text><text class="s" x="1404" y="672">9 Jun 15:54</text><text class="s" x="1468" y="672">9 Jun 15:58</text>
<use href="#hi" x="1152" y="175"/>
<text x="1189.500" y="185.500" class="sl" textLength="224" lengthAdjust="spacingAndGlyphs">MESM21, M1:  Micro E-mini S&amp;P 500 ($5): June 2021</text>
<text x="1391.500" y="186.500" class="sl" textLength="126" lengthAdjust="spacingAndGlyphs">ScalpEx_2(Revers)_EA_license</text>
<use href="#ro" x="1521" y="173"/>
<rect x="1413.500" y="195.500" width="115" height="18.500" fill="#7a7a7a" stroke="#a4a4a4"/><text x="1435.500" y="209.500" class="mo">Enable BUY</text>
<rect x="1413.500" y="218.500" width="115" height="18.500" fill="#7a7a7a" stroke="#a4a4a4"/><text x="1431.500" y="232.500" class="mo">Enable SELL</text>

<!-- chart tabs -->
<rect x="214" y="688" width="1388" height="22" fill="#f0f0f0"/>
<path d="M306.500 690H1602" stroke="#000"/>
<path d="M218.500 690v18H306.500V690" fill="#fff" stroke="#000"/>
<text x="229" y="705" class="m" textLength="65" lengthAdjust="spacingAndGlyphs">MESM21,M1</text><text x="319" y="705" class="m g" textLength="65" lengthAdjust="spacingAndGlyphs">MESM21,M1</text><path d="M395.500 695v13" stroke="#888"/><text x="407" y="705" class="m g" textLength="62" lengthAdjust="spacingAndGlyphs">EPM21,M30</text>
<path d="M1565 698l-3 3 3 3M1583 698l3 3-3 3" fill="none" stroke="#999"/>

<!-- toolbox -->
<path d="M0 713.500H1602" stroke="#a0a0a0" stroke-width="1.500"/>
<path d="M7 717l5 5M12 717l-5 5" stroke="#000" stroke-width="1.500"/>
<rect x="4" y="740" width="12" height="95" fill="#c9dcec"/>
<rect x="17" y="715" width="1562" height="96" fill="#fff"/>
<path d="M17.500 715v120" stroke="#bbb"/>
<rect x="17" y="759" width="1562" height="19" fill="#e9e9e9"/>
<rect x="17" y="778" width="1562" height="21" fill="#c0c0c0"/>
<rect x="842" y="739" width="126" height="19" fill="#66f566"/><rect x="842" y="759" width="126" height="19" fill="#66f566"/>
<path d="M17 758.500H1579M17 738.500H1579" stroke="#d4d4d4"/>
<path d="M177.500 716v62M292.500 716v62M381.500 716v62M457.500 716v62M585.500 716v62M713.500 716v62M841.500 716v62M968.500 716v62M1108.500 716v62M1236.500 716v62M1478.500 716v62" stroke="#dcdcdc"/>
<rect x="1579" y="715" width="18" height="96" fill="#f0f0f0"/><rect x="1580" y="777" width="16" height="24" fill="#cdcdcd"/>
<path d="M1584 724l4-3 4 3M1584 803l4 3 4-3" fill="none" stroke="#555" stroke-width="1.500"/>
<text x="24" y="731" class="m">Время</text><path d="M73 731l4-5 4 5z" fill="#333"/>
<text x="287" y="731" class="m e">Символ</text><text x="376" y="731" class="m e">Тикет</text><text x="451.500" y="731" class="m e">Тип</text><text x="580" y="731" class="m e">Объем</text><text x="708" y="731" class="m e">Цена</text><text x="835.500" y="731" class="t e">S / L</text><text x="963" y="731" class="t e">T / P</text><text x="1102.500" y="731" class="m e">Время</text><text x="1231" y="731" class="m e">Цена</text><text x="1473.500" y="731" class="m e">Прибыль</text><text x="1573" y="731" class="m e">Изменение</text>
<use href="#dl" x="20" y="741"/><use href="#dl" x="20" y="761"/>
<text x="39" y="752.500" class="t">2021.06.09 07:41:02</text><text x="288" y="752.500" class="e">mesm21</text><text x="378.500" y="752.500" class="t e">134495969</text><text x="454" y="752.500" class="e">sell</text><text x="581.500" y="752.500" class="t e">1</text><text x="710" y="752.500" class="t e">4228.75</text><text x="838" y="752.500" class="t e">4228.50</text><text x="966" y="752.500" class="t e">4225.00</text><text x="1105" y="752.500" class="t e">2021.06.09 07:55:46</text><text x="1233" y="752.500" class="t e">4225.00</text><text x="1475.500" y="752.500" class="t e" style="fill:#00f">15.39</text><text x="1575" y="752.500" class="t e" style="fill:#00f">0.09 %</text>
<text x="39" y="772.500" class="t">2021.06.09 14:45:00</text><text x="288" y="772.500" class="e">mesm21</text><text x="378.500" y="772.500" class="t e">134544076</text><text x="454" y="772.500" class="e">sell</text><text x="581.500" y="772.500" class="t e">2</text><text x="710" y="772.500" class="t e">4230.875</text><text x="838" y="772.500" class="t e">4229.75</text><text x="966" y="772.500" class="t e">4226.25</text><text x="1105" y="772.500" class="t e">2021.06.09 15:56:15</text><text x="1233" y="772.500" class="t e">4226.25</text><text x="1475.500" y="772.500" class="t e" style="fill:#00f">37.96</text><text x="1575" y="772.500" class="t e" style="fill:#00f">0.11 %</text>
<circle cx="26" cy="788" r="5.500" fill="none" stroke="#333" stroke-width="1.200"/><path d="M23 788h6M26 785v6" stroke="#333"/>
<text x="39" y="792.500" class="m b" textLength="99" lengthAdjust="spacingAndGlyphs">Прибыль: 142.79</text>
<text x="139.500" y="792.500" class="m b" textLength="76.500" lengthAdjust="spacingAndGlyphs">Кредит: 0.00</text>
<text x="222.500" y="792.500" class="m b" textLength="109" lengthAdjust="spacingAndGlyphs">Депозит: 10 000.00</text>
<text x="338" y="792.500" class="m b" textLength="71" lengthAdjust="spacingAndGlyphs">Снятие: 0.00</text>
<text x="415" y="792.500" class="m b" textLength="100" lengthAdjust="spacingAndGlyphs">Баланс: 10 142.79</text>
<text x="1438" y="792.500" class="m b" textLength="37" lengthAdjust="spacingAndGlyphs">158.05</text>
<path d="M17 811.500H1597" stroke="#000"/>
<rect x="17" y="812" width="1585" height="24" fill="#f0f0f0"/>
<path d="M153.500 812v22.500H219.500V811" fill="#fff" stroke="#000"/><rect x="154" y="810.500" width="65" height="2" fill="#fff"/>
<text x="30.500" y="824.500" class="m g" textLength="51" lengthAdjust="spacingAndGlyphs">Торговля</text><text x="102" y="824.500" class="m g" textLength="41" lengthAdjust="spacingAndGlyphs">Активы</text><text x="163" y="824.500" class="m" textLength="47" lengthAdjust="spacingAndGlyphs">История</text><text x="230.500" y="824.500" class="m g" textLength="46.500" lengthAdjust="spacingAndGlyphs">Новости</text><text x="297.500" y="824.500" class="m g" textLength="34" lengthAdjust="spacingAndGlyphs">Почта</text><text x="334" y="828" style="font-size:9px;fill:#e00">7</text><text x="358.500" y="824.500" class="m g" textLength="57" lengthAdjust="spacingAndGlyphs">Календарь</text><text x="436" y="824.500" class="m g" textLength="56" lengthAdjust="spacingAndGlyphs">Компания</text><text x="513" y="824.500" class="m g" textLength="41" lengthAdjust="spacingAndGlyphs">Алерты</text><text x="574" y="824.500" class="m g" textLength="36.700" lengthAdjust="spacingAndGlyphs">Статьи</text><text x="612" y="828" style="font-size:9px;fill:#e00">2</text><text x="638" y="824.500" class="m g" textLength="65" lengthAdjust="spacingAndGlyphs">Библиотека</text><text x="723" y="824.500" class="m g" textLength="52.500" lengthAdjust="spacingAndGlyphs">Эксперты</text><text x="797" y="824.500" class="m g" textLength="43" lengthAdjust="spacingAndGlyphs">Журнал</text>
<path d="M92.500 815v13M287.500 815v13M348.500 815v13M426.500 815v13M502.500 815v13M563.500 815v13M628.500 815v13M712.500 815v13M786.500 815v13" stroke="#999"/>
<g transform="translate(1345,814)"><path d="M2 7a5 5 0 0 1 8-3M0 6a8 8 0 0 1 12-3" fill="none" stroke="#2a8ad8" stroke-width="1.200"/><path d="M3 7v10M8 7v10" stroke="#2a9a2a" stroke-width="2.500"/></g>
<text x="1361" y="826" class="m" textLength="48.500" lengthAdjust="spacingAndGlyphs">Сигналы</text>
<g transform="translate(1424,814)"><path d="M2 7a4 4 0 0 1 3-5 5 5 0 0 1 8 0 4 4 0 0 1 0 5z" fill="#4aa8e8"/><rect x="2" y="8" width="11" height="3.500" fill="#415060"/><rect x="2" y="12" width="11" height="3.500" fill="#415060"/><path d="M7.500 16v3" stroke="#333"/></g>
<text x="1442" y="826" class="m" textLength="20" lengthAdjust="spacingAndGlyphs">VPS</text>
<rect x="1475.500" y="813.500" width="16" height="15" fill="#104020" stroke="#1a6cb8"/><rect x="1475.500" y="813.500" width="16" height="3" fill="#1a6cb8"/><path d="M1478 825l4-4 3 2 4-5" fill="none" stroke="#7fd63a"/>
<text x="1494" y="826" class="m" textLength="93" lengthAdjust="spacingAndGlyphs">Тестер стратегий</text>
<text x="1288" y="826" class="m" textLength="41" lengthAdjust="spacingAndGlyphs">Маркет</text>
<rect x="1273" y="816" width="11" height="12" fill="#f6c92a" stroke="#a07810"/>
<text transform="translate(14,832) rotate(-90)" style="font-size:11.500px">Инструменты</text>
<!-- status bar -->
<path d="M0 836.500H1602" stroke="#a0a0a0" stroke-width="1.500"/>
<text x="4" y="853.500" class="m">Вкладки</text><text x="915" y="853.500" class="t">Default</text>
<path d="M909.500 841v17M1036.500 841v17M1134.500 841v17M1205.500 841v17M1276.500 841v17M1343.500 841v17M1413.500 841v17M1479.500 841v17" stroke="#a0a0a0"/>
<rect x="1485" y="842" width="8" height="15" fill="#3a9ae0" stroke="#1a6cb8"/><circle cx="1496" cy="854" r="4.500" fill="#35a535"/><path d="M1494 854l1.500 2 3-3" stroke="#fff" fill="none"/>
<text x="1505" y="853.500" class="t">38.7 / 0.1 Mb</text>

<!-- taskbar -->
<rect x="2" y="860" width="1600" height="40" fill="#101010"/>
<rect x="297" y="860" width="47.500" height="40" fill="#2e2e2e"/>
<path d="M18 875l7-1v6h-7zM26 873.500l9-1.500v8h-9zM18 881h7v6l-7-1zM26 881h9v8l-9-1.500z" fill="#fff"/>
<path d="M68.500 875.500h11v11h-11z" fill="none" stroke="#fff"/><path d="M65 877v8M83 877v8" stroke="#fff"/>
<path d="M113 873h9l2 3h13v13h-24z" fill="#f6c84a"/><rect x="113" y="878" width="24" height="11" fill="#fbe089"/><rect x="121" y="882" width="8" height="7" fill="#2a9ad8"/>
<circle cx="174" cy="880" r="11" fill="#fff"/><path d="M170 873l4 7 4-7M174 880v8" fill="none" stroke="#e8262a" stroke-width="2.500"/>
<circle cx="223" cy="880" r="11" fill="#db4437"/><path d="M223 880L213 886a11 11 0 0 0 15 4z" fill="#0f9d58"/><path d="M223 880l10-4a11 11 0 0 1-5 14z" fill="#f4b400"/><circle cx="224" cy="882" r="7" fill="#7a6a5a"/><circle cx="224" cy="879" r="3" fill="#d8b59a"/>
<circle cx="272" cy="879" r="11" fill="#2ca5e0"/><path d="M265 879l13-5-2 11-4-3-2 2-1-3z" fill="#fff"/><rect x="270" y="884" width="16" height="10" rx="2" fill="#e53935"/><text x="272" y="892.500" style="font-size:8px;fill:#fff">.81</text>
<circle cx="321" cy="873" r="4.500" fill="#5cb030"/><circle cx="315" cy="884" r="5" fill="#3a8ad8"/><circle cx="327" cy="884" r="5" fill="#3a8ad8"/><circle cx="321" cy="880" r="6" fill="#f3d040"/><text x="318.500" y="884" style="font-size:9px;font-weight:bold;fill:#7a4a00">$</text>
<rect x="360" y="870" width="20" height="21" rx="2" fill="#fff"/><path d="M372 873c-4 3-6 7-5 11l5 2-2-5 3-2z" fill="#d32027"/>
<path d="M105.500 899h31M154 899h32M203 899h32M252.500 899h32M297 899h47.500M352 899h31" stroke="#76b9ed" stroke-width="2"/>
<!-- tray -->
<rect x="1166" y="881" width="9" height="9" fill="#ddd"/><path d="M1168 881v-3a2.500 2.500 0 0 1 5 0v3" fill="none" stroke="#ddd"/><circle cx="1170.500" cy="873" r="2" fill="#ddd"/>
<path d="M1194 871l7 3v7c0 5-4 7-7 9-3-2-7-4-7-9v-7z" fill="#1f9e7a"/><path d="M1190.500 880l2.500 2.500 4-4" stroke="#fff" fill="none"/>
<circle cx="1218.500" cy="880" r="8" fill="#fff"/><path d="M1215 875l3.500 5 3.500-5M1218.500 880v6" fill="none" stroke="#e8262a" stroke-width="2"/>
<circle cx="1241" cy="878" r="7.500" fill="#2a9ad8"/><rect x="1240" y="880" width="10" height="9" fill="#e53935"/>
<rect x="1257" y="872" width="17" height="17" fill="#e8372a"/><path d="M1265.500 875l5 5-5 5-5-5z" fill="#fff"/>
<path d="M1282 887c0-8 8-13 16-13-2 8-9 13-16 13z" fill="#f4f4f4"/><path d="M1284 884c3 0 8-4 11-8" stroke="#101010" fill="none"/>
<circle cx="1313" cy="880" r="8" fill="#e8e8e8"/><circle cx="1318" cy="886" r="2.500" fill="#e53935"/>
<circle cx="1337" cy="880" r="8" fill="#e8202a"/><path d="M1333 884v-8l4 5 4-5v8" stroke="#fff" fill="none" stroke-width="1.300"/>
<path d="M1353 872h16v13l-8 5-8-5z" fill="#e8c23a"/><path d="M1358 875h6v8h-6z" fill="#fff"/>
<path d="M1378 875v8M1382 875v8" stroke="#fff"/><rect x="1381.500" y="876.500" width="12" height="8" fill="none" stroke="#fff"/><rect x="1383" y="878" width="9" height="5" fill="#fff"/>
<path d="M1402 888a12 12 0 0 1 13-13M1405 888a8 8 0 0 1 9-9M1408 888a4 4 0 0 1 5-5" fill="none" stroke="#ccc" stroke-dasharray="2 1"/>
<path d="M1428 877h3l4-3v13l-4-3h-3z" fill="none" stroke="#fff"/><path d="M1437 878a4 4 0 0 1 0 6M1439 875a8 8 0 0 1 0 11" fill="none" stroke="#fff"/>
<text x="1451.500" y="884" style="font-size:11px;fill:#fff" textLength="23" lengthAdjust="spacingAndGlyphs">NLD</text>
<text x="1513.500" y="875.500" style="font-size:11px;fill:#fff;text-anchor:middle">18:02</text>
<text x="1514" y="893" style="font-size:11px;fill:#fff;text-anchor:middle">09.06.2021</text>
<path d="M1559.500 873.500h15v12h-8l-3 3v-3h-4z" fill="none" stroke="#fff"/>

<!-- watermark -->
<text x="1180" y="775" style="font-size:20px;fill:#9a9a9a;fill-opacity:.6" textLength="184" lengthAdjust="spacingAndGlyphs">Активация Windows</text>
<text x="1180" y="795" style="font-size:13px;fill:#8a8a8a;fill-opacity:.5" textLength="345" lengthAdjust="spacingAndGlyphs">Чтобы активировать Windows, перейдите в раздел</text>

<!-- annotation 1 overlay -->
<rect x="228" y="579" width="509" height="80" rx="3" fill="#fff" fill-opacity=".78"/>
<text x="270.500" y="615" style="font-size:31px;fill:#e8392f" textLength="450" lengthAdjust="spacingAndGlyphs">Прибыль второго дня торговли</text>
<text x="270" y="651" style="font-size:31px;fill:#e8392f" textLength="126" lengthAdjust="spacingAndGlyphs">на Demo</text>
<!-- big arrow -->
<path d="M250 633L253 636 178 718 187 731 158 734 158 711 169 719Z" fill="#e53f33"/>
<!-- annotation 2 -->
<rect x="992" y="783" width="328" height="50" rx="5" fill="#fbfbfb" fill-opacity=".93"/>
<text x="1009" y="817" style="font-size:30px;fill:#e53f33" textLength="295" lengthAdjust="spacingAndGlyphs">За два дня на Demo</text>
<!-- red rects -->
<rect x="3.500" y="737.500" width="144" height="75" rx="4" fill="none" stroke="#e53f33" stroke-width="4"/>
<rect x="1432.500" y="732.500" width="97" height="78" rx="4" fill="none" stroke="#e53f33" stroke-width="4"/>
<path d="M1358 789l52-2.500V783l17 5-17 5v-3.500l-52 .5z" fill="#e53f33"/>
<rect x="0" y="0" width="2" height="900" fill="#fff"/>
</svg>
</body></html>
